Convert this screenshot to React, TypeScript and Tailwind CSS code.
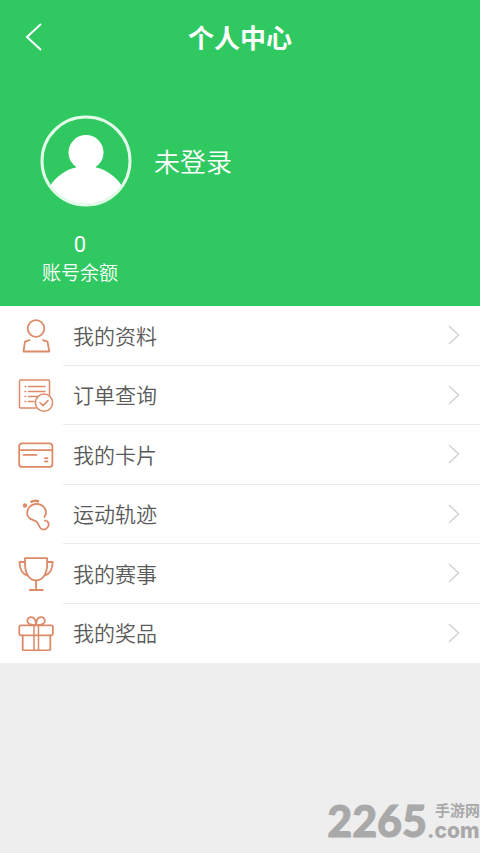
import React from "react";

const iconProps = {
    viewBox: "0 0 36 36",
    fill: "none",
    stroke: "#dc8a68",
    strokeWidth: 1.8,
    strokeLinecap: "round" as const,
    strokeLinejoin: "round" as const,
    "aria-hidden": true,
    className: "w-9 h-9 shrink-0",
};

function ProfileIcon() {
    return (
        <svg {...iconProps}>
            <circle cx="18" cy="10.5" r="8.3" />
            <path d="M11.5 22.2 7 23.6 5.5 33.5h25.8L29.5 23.6l-4.5-1.4" />
        </svg>
    );
}

function OrderIcon() {
    return (
        <svg {...iconProps} strokeWidth={1.5}>
            <path d="M31.5 18V4q0-1-1-1h-28q-1 0-1 1v26q0 1 1 1H18" />
            <path d="M10.5 9.5H27M10.5 14.5H27M10.5 19.5H22M10.5 24.5H16" strokeWidth={1.4} />
            <path d="M7 9.5h.8M7 14.5h.8M7 19.5h.8M7 24.5h.8" strokeWidth={1.4} />
            <circle cx="26" cy="25.7" r="8.6" fill="white" />
            <path d="m22 25.7 3 2.9 5-5" />
        </svg>
    );
}

function CardIcon() {
    return (
        <svg {...iconProps}>
            <rect x="1.2" y="6.3" width="33.2" height="23.6" rx="3" />
            <path d="M1.5 13.2h32.5M5.5 17.8h13" />
            <path d="M27 21.2h2.5M27 24.4h2.5" />
        </svg>
    );
}

function FootprintIcon() {
    return (
        <svg {...iconProps}>
            <circle cx="7" cy="9.5" r="2.2" fill="#dc8a68" stroke="none" />
            <path d="M12.6 6.2q3.8-2.4 8.4-.8" strokeWidth={2.6} strokeLinecap="butt" />
            <path d="M26.5 21C28.6 17.500 28.300 13.500 25.500 10.700 21.800 7 15.500 7 11.800 10.700 8.200 14.300 8.300 19.500 11.500 22.300 14.500 24.800 18.200 23.500 20 27.500 21.300 30.500 22 33.600 25.300 33.600 29 33.600 31.600 29.800 30.300 26.700 29.700 25.300 28.500 24.600 27 24.700" />
        </svg>
    );
}

function TrophyIcon() {
    return (
        <svg {...iconProps}>
            <path d="M7 2.2h22.2v5.5c0 9.8-4.3 16.8-11.1 16.8S7 17.5 7 7.7z" />
            <path d="M7 6H1.5c.2 7.2 2.7 12.1 8 13.5M29.2 6h5.5c-.2 7.2-2.7 12.1-8 13.5" />
            <path d="M18.1 24.7V34M11.8 34h13" />
        </svg>
    );
}

function GiftIcon() {
    return (
        <svg {...iconProps}>
            <rect x="1.3" y="10.3" width="33.6" height="10" rx="1.5" />
            <path d="M4.7 20.3v14q0 1 1 1h25.6q1 0 1-1v-14" />
            <path d="M16 10.3v25M20.5 10.3v25" strokeWidth={1.5} />
            <path d="M18 10C12 10.4 9.3 8.8 9.3 5.8c0-2.4 1.8-3.7 3.8-3.7 3.2 0 4.9 3.3 4.9 7.9zM18.2 10c6 .4 8.7-1.2 8.7-4.2 0-2.4-1.8-3.7-3.8-3.7-3.2 0-4.9 3.3-4.9 7.9z" />
        </svg>
    );
}

function Avatar() {
    return (
        <svg viewBox="0 0 92 92" className="w-[92px] h-[92px] shrink-0" aria-hidden="true">
            <clipPath id="avatar-clip">
                <circle cx="46" cy="46" r="45" />
            </clipPath>
            <g clipPath="url(#avatar-clip)" fill="white">
                <circle cx="46" cy="37.5" r="17.5" />
                <path d="M36 50h20v2.5c11 2.5 20 9 26 18.5l6 21H4l6-21c6-9.5 15-16 26-18.5z" />
            </g>
            <circle cx="46" cy="46" r="44" fill="none" stroke="#e2fbe8" strokeWidth="3" />
        </svg>
    );
}

const menuItems = [
    { label: "我的资料", Icon: ProfileIcon },
    { label: "订单查询", Icon: OrderIcon },
    { label: "我的卡片", Icon: CardIcon },
    { label: "运动轨迹", Icon: FootprintIcon },
    { label: "我的赛事", Icon: TrophyIcon },
    { label: "我的奖品", Icon: GiftIcon },
];

export default function App() {
    return (
        <div className="relative min-h-screen bg-[#eeeeee] font-['Noto_Sans_CJK_SC',sans-serif] font-[350]">
            <div className="bg-[#30c961] text-white">
                {/* Header */}
                <header className="grid grid-cols-[72px_1fr_72px] items-center h-[74px]">
                    <button aria-label="返回" className="flex items-center h-full pl-6">
                        <svg
                            viewBox="0 0 18 30"
                            className="w-[18px] h-[30px]"
                            fill="none"
                            stroke="white"
                            strokeWidth="2"
                        >
                            <path d="M17 2 3 15l14 13" />
                        </svg>
                    </button>
                    <h1 className="text-center text-[26px] leading-8 font-bold">个人中心</h1>
                </header>

                {/* User */}
                <div className="flex items-center gap-[22px] px-10 pt-[41px]">
                    <Avatar />
                    <span className="text-[26px] leading-8">未登录</span>
                </div>

                {/* Balance */}
                <div className="flex px-10 pt-6 pb-[22px]">
                    <div className="flex flex-col items-center w-20">
                        <span className="font-[Roboto,sans-serif] text-[22px] leading-7 font-normal">0</span>
                        <span className="text-[19px] leading-[25px]">账号余额</span>
                    </div>
                </div>
            </div>

            {/* Menu */}
            <nav className="grid auto-rows-fr min-h-[357px] bg-white">
                {menuItems.map(({ label, Icon }) => (
                    <a key={label} href="#" className="group flex items-stretch pl-[18px]">
                        <span className="flex items-center w-[45px]">
                            <Icon />
                        </span>
                        <span className="flex flex-1 items-center justify-between pl-[10px] pr-5 border-b border-[#ebebeb] group-last:border-transparent">
                            <span className="pb-px text-[21px] leading-7 text-[#5a5a5a]">{label}</span>
                            <svg
                                viewBox="0 0 12 20"
                                className="w-3 h-5"
                                fill="none"
                                stroke="#d2d2d2"
                                strokeWidth="1.5"
                                aria-hidden="true"
                            >
                                <path d="m1 1 9.5 9L1 19" />
                            </svg>
                        </span>
                    </a>
                ))}
            </nav>

            {/* Watermark */}
            <div className="absolute right-0 bottom-3 flex items-end text-[#a9a9a9]">
                <span className="font-[Lato,sans-serif] text-[43px] leading-10 font-black [-webkit-text-stroke:1px_#a9a9a9]">
                    2265
                </span>
                <span className="flex flex-col">
                    <span className="pl-2 text-[15px] leading-[22px] font-bold">手游网</span>
                    <span className="font-[Inter,sans-serif] text-[21px] leading-5 font-extrabold">.com</span>
                </span>
            </div>
        </div>
    );
}
